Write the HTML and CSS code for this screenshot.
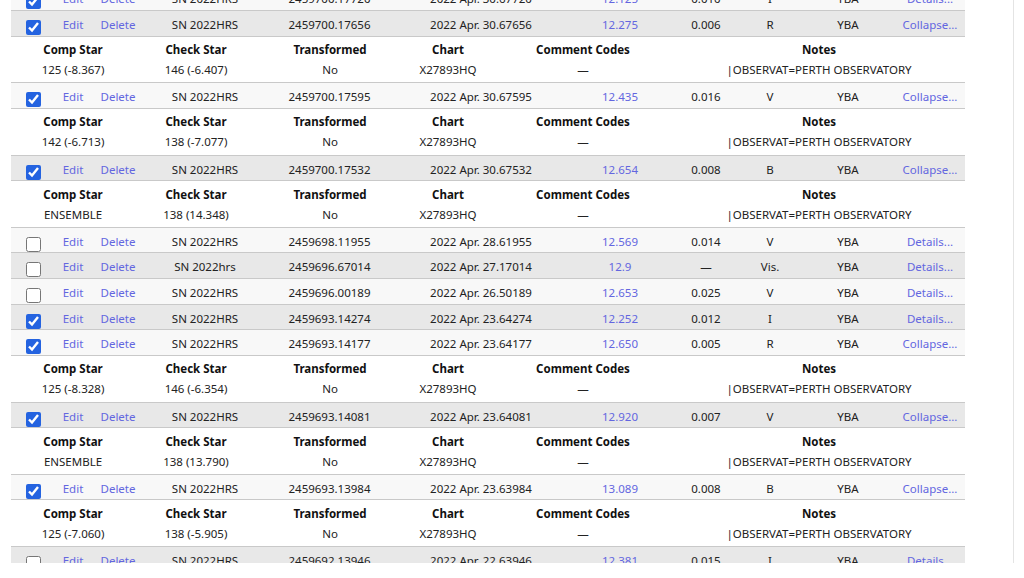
FILE: index.html
```html
<!DOCTYPE html>
<html lang="en">
<head>
<meta charset="utf-8">
<title>Observations</title>
<link rel="stylesheet" href="styles.css">
</head>
<body>
<div class="page">
  <div class="obs-list">

    <div class="obs-row light">
      <div class="cell"><input type="checkbox" class="chk" checked></div>
      <div class="cell"><a class="link">Edit</a></div>
      <div class="cell"><a class="link">Delete</a></div>
      <div class="cell">SN 2022HRS</div>
      <div class="cell">2459700.17720</div>
      <div class="cell">2022 Apr. 30.67720</div>
      <div class="cell"><a class="link">12.125</a></div>
      <div class="cell">0.010</div>
      <div class="cell">I</div>
      <div class="cell">YBA</div>
      <div class="cell"><a class="link">Details...</a></div>
    </div>

    <div class="obs-row gray">
      <div class="cell"><input type="checkbox" class="chk" checked></div>
      <div class="cell"><a class="link">Edit</a></div>
      <div class="cell"><a class="link">Delete</a></div>
      <div class="cell">SN 2022HRS</div>
      <div class="cell">2459700.17656</div>
      <div class="cell">2022 Apr. 30.67656</div>
      <div class="cell"><a class="link">12.275</a></div>
      <div class="cell">0.006</div>
      <div class="cell">R</div>
      <div class="cell">YBA</div>
      <div class="cell"><a class="link">Collapse...</a></div>
    </div>
    <div class="obs-detail">
      <div class="dh">Comp Star</div><div class="dh">Check Star</div><div class="dh">Transformed</div><div class="dh">Chart</div><div class="dh">Comment Codes</div><div class="dh">Notes</div>
      <div class="dv">125 (-8.367)</div><div class="dv">146 (-6.407)</div><div class="dv">No</div><div class="dv">X27893HQ</div><div class="dv">—</div><div class="dv">|OBSERVAT=PERTH OBSERVATORY</div>
    </div>

    <div class="obs-row light">
      <div class="cell"><input type="checkbox" class="chk" checked></div>
      <div class="cell"><a class="link">Edit</a></div>
      <div class="cell"><a class="link">Delete</a></div>
      <div class="cell">SN 2022HRS</div>
      <div class="cell">2459700.17595</div>
      <div class="cell">2022 Apr. 30.67595</div>
      <div class="cell"><a class="link">12.435</a></div>
      <div class="cell">0.016</div>
      <div class="cell">V</div>
      <div class="cell">YBA</div>
      <div class="cell"><a class="link">Collapse...</a></div>
    </div>
    <div class="obs-detail">
      <div class="dh">Comp Star</div><div class="dh">Check Star</div><div class="dh">Transformed</div><div class="dh">Chart</div><div class="dh">Comment Codes</div><div class="dh">Notes</div>
      <div class="dv">142 (-6.713)</div><div class="dv">138 (-7.077)</div><div class="dv">No</div><div class="dv">X27893HQ</div><div class="dv">—</div><div class="dv">|OBSERVAT=PERTH OBSERVATORY</div>
    </div>

    <div class="obs-row gray">
      <div class="cell"><input type="checkbox" class="chk" checked></div>
      <div class="cell"><a class="link">Edit</a></div>
      <div class="cell"><a class="link">Delete</a></div>
      <div class="cell">SN 2022HRS</div>
      <div class="cell">2459700.17532</div>
      <div class="cell">2022 Apr. 30.67532</div>
      <div class="cell"><a class="link">12.654</a></div>
      <div class="cell">0.008</div>
      <div class="cell">B</div>
      <div class="cell">YBA</div>
      <div class="cell"><a class="link">Collapse...</a></div>
    </div>
    <div class="obs-detail">
      <div class="dh">Comp Star</div><div class="dh">Check Star</div><div class="dh">Transformed</div><div class="dh">Chart</div><div class="dh">Comment Codes</div><div class="dh">Notes</div>
      <div class="dv">ENSEMBLE</div><div class="dv">138 (14.348)</div><div class="dv">No</div><div class="dv">X27893HQ</div><div class="dv">—</div><div class="dv">|OBSERVAT=PERTH OBSERVATORY</div>
    </div>

    <div class="obs-row light">
      <div class="cell"><input type="checkbox" class="chk"></div>
      <div class="cell"><a class="link">Edit</a></div>
      <div class="cell"><a class="link">Delete</a></div>
      <div class="cell">SN 2022HRS</div>
      <div class="cell">2459698.11955</div>
      <div class="cell">2022 Apr. 28.61955</div>
      <div class="cell"><a class="link">12.569</a></div>
      <div class="cell">0.014</div>
      <div class="cell">V</div>
      <div class="cell">YBA</div>
      <div class="cell"><a class="link">Details...</a></div>
    </div>

    <div class="obs-row gray">
      <div class="cell"><input type="checkbox" class="chk"></div>
      <div class="cell"><a class="link">Edit</a></div>
      <div class="cell"><a class="link">Delete</a></div>
      <div class="cell">SN 2022hrs</div>
      <div class="cell">2459696.67014</div>
      <div class="cell">2022 Apr. 27.17014</div>
      <div class="cell"><a class="link">12.9</a></div>
      <div class="cell">—</div>
      <div class="cell">Vis.</div>
      <div class="cell">YBA</div>
      <div class="cell"><a class="link">Details...</a></div>
    </div>

    <div class="obs-row light">
      <div class="cell"><input type="checkbox" class="chk"></div>
      <div class="cell"><a class="link">Edit</a></div>
      <div class="cell"><a class="link">Delete</a></div>
      <div class="cell">SN 2022HRS</div>
      <div class="cell">2459696.00189</div>
      <div class="cell">2022 Apr. 26.50189</div>
      <div class="cell"><a class="link">12.653</a></div>
      <div class="cell">0.025</div>
      <div class="cell">V</div>
      <div class="cell">YBA</div>
      <div class="cell"><a class="link">Details...</a></div>
    </div>

    <div class="obs-row gray">
      <div class="cell"><input type="checkbox" class="chk" checked></div>
      <div class="cell"><a class="link">Edit</a></div>
      <div class="cell"><a class="link">Delete</a></div>
      <div class="cell">SN 2022HRS</div>
      <div class="cell">2459693.14274</div>
      <div class="cell">2022 Apr. 23.64274</div>
      <div class="cell"><a class="link">12.252</a></div>
      <div class="cell">0.012</div>
      <div class="cell">I</div>
      <div class="cell">YBA</div>
      <div class="cell"><a class="link">Details...</a></div>
    </div>

    <div class="obs-row light">
      <div class="cell"><input type="checkbox" class="chk" checked></div>
      <div class="cell"><a class="link">Edit</a></div>
      <div class="cell"><a class="link">Delete</a></div>
      <div class="cell">SN 2022HRS</div>
      <div class="cell">2459693.14177</div>
      <div class="cell">2022 Apr. 23.64177</div>
      <div class="cell"><a class="link">12.650</a></div>
      <div class="cell">0.005</div>
      <div class="cell">R</div>
      <div class="cell">YBA</div>
      <div class="cell"><a class="link">Collapse...</a></div>
    </div>
    <div class="obs-detail">
      <div class="dh">Comp Star</div><div class="dh">Check Star</div><div class="dh">Transformed</div><div class="dh">Chart</div><div class="dh">Comment Codes</div><div class="dh">Notes</div>
      <div class="dv">125 (-8.328)</div><div class="dv">146 (-6.354)</div><div class="dv">No</div><div class="dv">X27893HQ</div><div class="dv">—</div><div class="dv">|OBSERVAT=PERTH OBSERVATORY</div>
    </div>

    <div class="obs-row gray">
      <div class="cell"><input type="checkbox" class="chk" checked></div>
      <div class="cell"><a class="link">Edit</a></div>
      <div class="cell"><a class="link">Delete</a></div>
      <div class="cell">SN 2022HRS</div>
      <div class="cell">2459693.14081</div>
      <div class="cell">2022 Apr. 23.64081</div>
      <div class="cell"><a class="link">12.920</a></div>
      <div class="cell">0.007</div>
      <div class="cell">V</div>
      <div class="cell">YBA</div>
      <div class="cell"><a class="link">Collapse...</a></div>
    </div>
    <div class="obs-detail">
      <div class="dh">Comp Star</div><div class="dh">Check Star</div><div class="dh">Transformed</div><div class="dh">Chart</div><div class="dh">Comment Codes</div><div class="dh">Notes</div>
      <div class="dv">ENSEMBLE</div><div class="dv">138 (13.790)</div><div class="dv">No</div><div class="dv">X27893HQ</div><div class="dv">—</div><div class="dv">|OBSERVAT=PERTH OBSERVATORY</div>
    </div>

    <div class="obs-row light">
      <div class="cell"><input type="checkbox" class="chk" checked></div>
      <div class="cell"><a class="link">Edit</a></div>
      <div class="cell"><a class="link">Delete</a></div>
      <div class="cell">SN 2022HRS</div>
      <div class="cell">2459693.13984</div>
      <div class="cell">2022 Apr. 23.63984</div>
      <div class="cell"><a class="link">13.089</a></div>
      <div class="cell">0.008</div>
      <div class="cell">B</div>
      <div class="cell">YBA</div>
      <div class="cell"><a class="link">Collapse...</a></div>
    </div>
    <div class="obs-detail">
      <div class="dh">Comp Star</div><div class="dh">Check Star</div><div class="dh">Transformed</div><div class="dh">Chart</div><div class="dh">Comment Codes</div><div class="dh">Notes</div>
      <div class="dv">125 (-7.060)</div><div class="dv">138 (-5.905)</div><div class="dv">No</div><div class="dv">X27893HQ</div><div class="dv">—</div><div class="dv">|OBSERVAT=PERTH OBSERVATORY</div>
    </div>

    <div class="obs-row gray">
      <div class="cell"><input type="checkbox" class="chk"></div>
      <div class="cell"><a class="link">Edit</a></div>
      <div class="cell"><a class="link">Delete</a></div>
      <div class="cell">SN 2022HRS</div>
      <div class="cell">2459692.13946</div>
      <div class="cell">2022 Apr. 22.63946</div>
      <div class="cell"><a class="link">12.381</a></div>
      <div class="cell">0.015</div>
      <div class="cell">I</div>
      <div class="cell">YBA</div>
      <div class="cell"><a class="link">Details...</a></div>
    </div>

  </div>
</div>
</body>
</html>
```

FILE: styles.css
```css
html, body {
  margin: 0;
  padding: 0;
  background: #ffffff;
  overflow: hidden;
}

body {
  font-family: "Segoe UI", "Noto Sans", "Open Sans", sans-serif;
  font-size: 11.5px;
  color: #222222;
}

.page {
  box-sizing: border-box;
  width: 1014px;
  height: 578px;
  border-right: 1px solid #e4e4e4;
  padding-left: 11px;
}

.obs-list {
  width: 954px;
  margin-top: -14.6px;
}

.obs-row {
  box-sizing: border-box;
  height: 25.6px;
  display: grid;
  grid-template-columns: 45px 34px 56px 118px 131px 172px 106px 66px 62px 94px 70px;
  align-items: start;
  padding-top: 6px;
  border-bottom: 1px solid #c9c9c9;
  line-height: 16px;
}

.obs-row.gray { background: #e8e8e8; }
.obs-row.light { background: #f8f8f8; }

.cell {
  display: flex;
  justify-content: center;
  white-space: nowrap;
}

.link {
  color: #6366e0;
  text-decoration: none;
  cursor: pointer;
}

.chk {
  width: 15px;
  height: 15px;
  margin: 3px 0 0 0;
  accent-color: #2463e0;
}

.obs-detail {
  box-sizing: border-box;
  height: 46.7px;
  display: grid;
  grid-template-columns: 124px 122px 146px 90px 180px 292px;
  grid-template-rows: 20px 20px;
  padding-top: 3.5px;
  background: #ffffff;
  border-bottom: 1px solid #c9c9c9;
  line-height: 20px;
}

.dh, .dv {
  display: flex;
  justify-content: center;
  white-space: nowrap;
}

.dh {
  font-weight: 700;
  color: #111111;
}
```
